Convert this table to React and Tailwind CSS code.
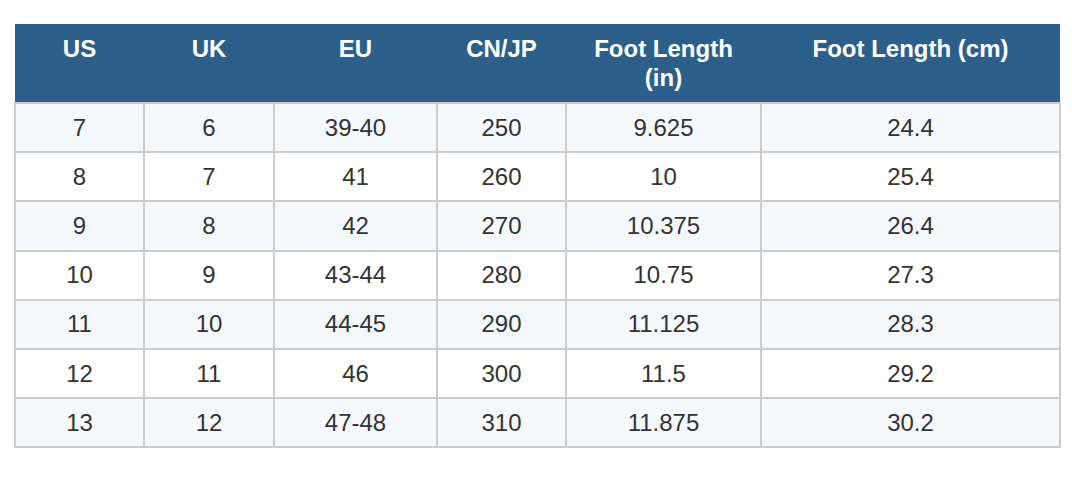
import React from "react";

const headers = ["US", "UK", "EU", "CN/JP", "Foot Length (in)", "Foot Length (cm)"];
const widths = ["w-[129px]", "w-[130px]", "w-[163px]", "w-[129px]", "w-[195px]", "w-[299px]"];

const rows = [
  ["7", "6", "39-40", "250", "9.625", "24.4"],
  ["8", "7", "41", "260", "10", "25.4"],
  ["9", "8", "42", "270", "10.375", "26.4"],
  ["10", "9", "43-44", "280", "10.75", "27.3"],
  ["11", "10", "44-45", "290", "11.125", "28.3"],
  ["12", "11", "46", "300", "11.5", "29.2"],
  ["13", "12", "47-48", "310", "11.875", "30.2"],
];

export default function App() {
  return (
    <div className="bg-white min-h-[493px] pt-[24px] pl-[14px] font-['Liberation_Sans',Arial,sans-serif]">
      <table className="table-fixed border-collapse w-[1045px] text-[24px]">
        <thead>
          <tr className="bg-[#2c5f8a] text-white h-[79px]">
            {headers.map((h, i) => (
              <th
                key={h}
                className={`${widths[i]} align-top font-bold px-3 pt-[10px] pb-2 leading-[29px]`}
              >
                {h}
              </th>
            ))}
          </tr>
        </thead>
        <tbody>
          {rows.map((r, ri) => (
            <tr key={ri} className={ri % 2 === 0 ? "bg-[#f5f8fb] h-[49.2px]" : "bg-white h-[49.2px]"}>
              {r.map((c, ci) => (
                <td
                  key={ci}
                  className="border-2 border-[#cccccc] text-center align-middle text-[#333333] px-3 py-0 leading-[28px]"
                >
                  {c}
                </td>
              ))}
            </tr>
          ))}
        </tbody>
      </table>
    </div>
  );
}
